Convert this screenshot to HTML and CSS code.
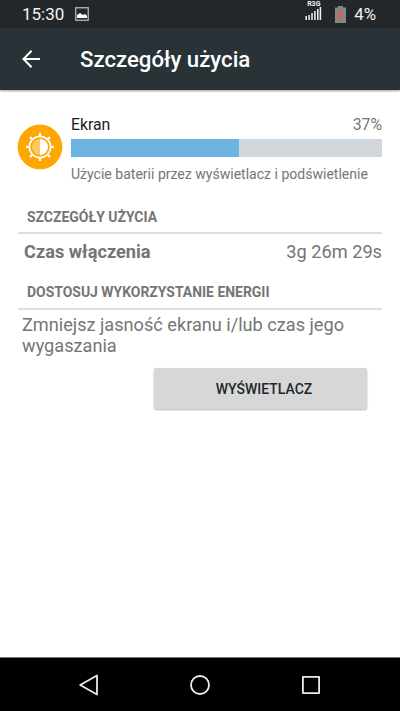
FILE: index.html
```html
<!DOCTYPE html>
<html lang="pl">
<head>
<meta charset="utf-8">
<title>Szczegóły użycia</title>
<link rel="stylesheet" href="styles.css">
</head>
<body>
<div class="status">
  <span class="time">15:30</span>
  <svg class="picture" width="14" height="14" viewBox="0 0 14 14"><rect x=".75" y=".75" width="12.5" height="12.5" fill="none" stroke="#b4b7b8" stroke-width="1.3"/><path d="M2 11V8l3-2 3 2 2-1 2 2v2z" fill="#fff"/></svg>
  <div class="signal">
    <span class="network">R3G</span>
    <svg width="17" height="13" viewBox="0 0 17 13"><path d="M1.2 13V9M4.1 13V8M7 13V6M9.9 13V4M12.8 13V2M15.4 13V0" stroke="#f2f2f2" stroke-width="1.5"/></svg>
  </div>
  <svg class="battery" width="11" height="17" viewBox="0 0 11 17"><path d="M0 1.5h3V0h5v1.5h3V17H0z" fill="#858788"/><path d="M4 4.5h3v7H4zM4 12.5h3v2H4z" fill="#e75b3c"/></svg>
  <span class="level">4%</span>
</div>
<header class="appbar">
  <svg class="back" width="18" height="18" viewBox="0 0 18 18"><path d="M9.6.8 1.5 9l8.1 8.2M1.5 9H18" fill="none" stroke="#fff" stroke-width="2"/></svg>
  <h1>Szczegóły użycia</h1>
</header>
<main>
  <section class="summary">
    <svg class="sun" width="46" height="46" viewBox="0 0 46 46"><circle cx="23" cy="23" r="22.4" fill="#ffa700"/><g fill="none" stroke="#fff"><circle cx="23" cy="23" r="10.6" stroke-width="1.7"/><path d="M23 9v4M23 33v4M9 23h4M33 23h4M13.1 13.1l2.8 2.8M30.1 30.1l2.8 2.8M13.1 32.9l2.8-2.8M30.1 15.9l2.8-2.8" stroke-width="2.2"/></g><path d="M23 15a8 8 0 0 0 0 16z" fill="#fff" fill-opacity=".38"/><path d="M23 15a8 8 0 0 1 0 16z" fill="#fff"/></svg>
    <div class="usage">
      <div class="line"><span class="name">Ekran</span><span class="percent">37%</span></div>
      <div class="bar"><div class="fill"></div></div>
      <p class="note">Użycie baterii przez wyświetlacz i podświetlenie</p>
    </div>
  </section>
  <h2 class="first">SZCZEGÓŁY UŻYCIA</h2>
  <div class="detail"><b>Czas włączenia</b><span>3g 26m 29s</span></div>
  <h2 class="second">DOSTOSUJ WYKORZYSTANIE ENERGII</h2>
  <p class="advice">Zmniejsz jasność ekranu i/lub czas jego wygaszania</p>
  <button>WYŚWIETLACZ</button>
</main>
<nav>
  <svg width="20" height="22" viewBox="0 0 20 22"><path d="M18 1.5v19L1.2 11z"/></svg>
  <svg width="20" height="22" viewBox="0 0 20 22"><circle cx="10" cy="11" r="9"/></svg>
  <svg width="20" height="22" viewBox="0 0 20 22"><rect x="1.9" y="2.9" width="16.2" height="16.2"/></svg>
</nav>
</body>
</html>
```
FILE: styles.css
```css
* { box-sizing: border-box; }
body {
  margin: 0;
  height: 711px;
  display: flex;
  flex-direction: column;
  overflow: hidden;
  background: #fff;
  color: #757575;
  font-family: Roboto, "Liberation Sans", sans-serif;
}
.status {
  height: 28px;
  flex: none;
  display: flex;
  align-items: center;
  padding: 0 24px 0 22px;
  background: #222729;
  color: #f2f2f2;
  font-size: 17px;
}
.picture { margin-left: 11px; }
.signal {
  margin-left: auto;
  width: 17px;
  height: 18px;
  margin-bottom: 6px;
  display: flex;
  flex-direction: column;
  align-items: center;
  justify-content: space-between;
}
.network { font-size: 7px; line-height: 5px; font-weight: 700; }
.signal svg { display: block; }
.battery { margin: 0 8px 0 13px; }
.level { font-size: 16.8px; }
.appbar {
  height: 62px;
  flex: none;
  display: flex;
  align-items: center;
  padding-left: 22px;
  background: #283237;
  color: #fff;
  box-shadow: 0 1px 2px rgba(0, 0, 0, .4);
}
h1 { margin: 0 0 0 40px; font-size: 22.2px; font-weight: 500; line-height: 26px; }
main { flex: 1; padding: 25px 18px 0; }
.summary { display: flex; margin-left: -1px; }
.sun { margin-top: 9px; flex: none; }
.usage { flex: 1; margin-left: 8px; }
.line { display: flex; justify-content: space-between; font-size: 15.8px; line-height: 20px; }
.name { color: #212121; }
.bar { height: 18px; margin-top: 4px; background: #cfd6dc; }
.fill { width: 54%; height: 100%; background: #6db4e1; }
.note { margin: 8px 0 0; font-size: 14.04px; line-height: 18px; white-space: nowrap; }
h2 {
  margin: 0;
  padding-left: 9px;
  border-bottom: 2px solid #dedede;
  font-size: 13.95px;
  font-weight: 700;
  line-height: 16px;
}
.first { margin-top: 26px; height: 25px; }
.detail {
  display: flex;
  justify-content: space-between;
  margin-top: 7px;
  padding-left: 6px;
  font-size: 18.2px;
  line-height: 22px;
}
.second { margin-top: 21px; height: 26px; }
.advice { margin: 4px 0 0; padding-left: 4px; font-size: 18.15px; line-height: 21px; }
button {
  display: block;
  width: 213px;
  height: 41px;
  margin: 12px 15px 0 auto;
  padding: 1px 0 0 7px;
  border: 0;
  border-radius: 2px;
  background: #d7d7d7;
  box-shadow: 0 1px 2px rgba(0, 0, 0, .3);
  color: #20282c;
  font: 500 14px/40px Roboto, "Liberation Sans", sans-serif;
}
nav {
  height: 54px;
  flex: none;
  display: flex;
  justify-content: space-between;
  align-items: center;
  padding: 0 79px;
  border-top: 1px solid #777;
  background: #000;
}
nav svg { fill: none; stroke: #e8ebea; stroke-width: 1.8; stroke-linejoin: round; }
```
